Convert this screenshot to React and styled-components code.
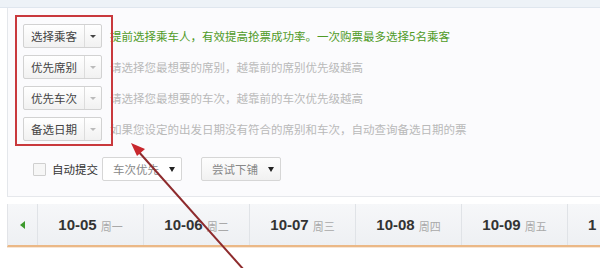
import React from "react"
import styled, { createGlobalStyle } from "styled-components"

const Global = createGlobalStyle`
  body {
    margin: 0;
    background: #fff;
    font-family: "Noto Sans CJK SC", "Liberation Sans", sans-serif;
    width: 600px;
    height: 268px;
    overflow: hidden;
  }
`

const Page = styled.div`
  position: relative;
  width: 600px;
  height: 268px;
  overflow: hidden;
`

const TopStrip = styled.div`
  height: 7px;
  background: #edf2f7;
  border-bottom: 1px solid #dfe6ee;
`

const Panel = styled.div`
  margin-left: 7px;
  border-left: 1px solid #e4e7eb;
  border-bottom: 1px solid #e6e8ec;
  background: #fbfbfd;
  padding: 16px 0 15px 15px;
  display: flex;
  flex-direction: column;
  gap: 7px;
`

const OptionRow = styled.div`
  display: flex;
  align-items: center;
  gap: 8px;
  height: 24px;
`

const Dropdown = styled.div`
  display: flex;
  width: 79px;
  height: 24px;
  box-sizing: border-box;
  border: 1px solid #d2d2d2;
  border-radius: 2px;
  background: linear-gradient(#ffffff, #f1f1f1);
  flex-shrink: 0;
`

const DropLabel = styled.span`
  flex: 1;
  display: flex;
  align-items: center;
  justify-content: center;
  font-size: 11.5px;
  color: #444;
  border-right: 1px solid #dcdcdc;
`

const DropArrow = styled.span`
  width: 16px;
  display: flex;
  align-items: center;
  justify-content: center;
  &::after {
    content: "";
    border-left: 3px solid transparent;
    border-right: 3px solid transparent;
    border-top: 3px solid ${p => (p.$active ? "#444" : "#bbb")};
  }
`

const Hint = styled.span`
  font-size: 11.5px;
  white-space: nowrap;
  color: ${p => (p.$green ? "#4f9a27" : "#b9b9b9")};
`

const SubmitRow = styled.div`
  display: flex;
  align-items: center;
  margin-top: 9px;
  padding-left: 10px;
  height: 24px;
`

const Check = styled.span`
  width: 11px;
  height: 11px;
  border: 1px solid #cfcfcf;
  background: #f6f6f6;
  border-radius: 1px;
  margin-right: 6px;
`

const CheckLabel = styled.span`
  font-size: 11.5px;
  color: #333;
  margin-right: 4px;
`

const Select = styled.div`
  width: 80px;
  height: 24px;
  box-sizing: border-box;
  border: 1px solid #d6d6d6;
  border-radius: 2px;
  background: ${p => (p.$shaded ? "linear-gradient(#fdfdfd, #f1f1f1)" : "#fff")};
  display: flex;
  align-items: center;
  padding: 0 6px 0 10px;
  margin-right: ${p => p.$gap || 0}px;
  font-size: 11.5px;
  color: #888;
  justify-content: space-between;
  &::after {
    content: "";
    border-left: 3px solid transparent;
    border-right: 3px solid transparent;
    border-top: 5px solid #222;
  }
`

const DateBar = styled.div`
  margin: 7px 0 0 7px;
  height: 41px;
  display: flex;
  border-left: 1px solid #e2e4e8;
  border-bottom: 2px solid #ebb886;
  background: linear-gradient(#f6f7f9, #eef0f3);
  box-shadow: 0 1px 0 #f7e6d6;
`

const PrevCell = styled.div`
  width: 29px;
  flex-shrink: 0;
  display: flex;
  align-items: center;
  justify-content: center;
  border-right: 1px solid #e0e3e7;
  &::before {
    content: "";
    border-top: 4px solid transparent;
    border-bottom: 4px solid transparent;
    border-right: 5px solid #3d9a2c;
  }
`

const DateCell = styled.div`
  width: 106px;
  flex-shrink: 0;
  box-sizing: border-box;
  display: flex;
  align-items: center;
  justify-content: ${p => (p.$edge ? "flex-start" : "center")};
  padding-left: ${p => (p.$edge ? 20 : 0)}px;
  gap: 4px;
  border-right: 1px solid #e0e3e7;
`

const DateNum = styled.span`
  font-family: "Liberation Sans", sans-serif;
  font-weight: bold;
  font-size: 15px;
  color: #333;
`

const Week = styled.span`
  font-size: 11px;
  color: #a9a9a9;
  margin-top: 2px;
`

const Highlight = styled.div`
  position: absolute;
  left: 15px;
  top: 15px;
  width: 98px;
  height: 131px;
  box-sizing: border-box;
  border: 2px solid #c9393d;
  pointer-events: none;
`

const Pointer = styled.svg`
  position: absolute;
  left: 0;
  top: 0;
  pointer-events: none;
`

const options = [
  { label: "选择乘客", hint: "提前选择乘车人，有效提高抢票成功率。一次购票最多选择5名乘客", green: true },
  { label: "优先席别", hint: "请选择您最想要的席别，越靠前的席别优先级越高" },
  { label: "优先车次", hint: "请选择您最想要的车次，越靠前的车次优先级越高" },
  { label: "备选日期", hint: "如果您设定的出发日期没有符合的席别和车次，自动查询备选日期的票" },
]

const dates = [
  ["10-05", "周一"],
  ["10-06", "周二"],
  ["10-07", "周三"],
  ["10-08", "周四"],
  ["10-09", "周五"],
]

function App() {
  return (
    <Page>
      <Global />
      <TopStrip />
      <Panel>
        {options.map(o => (
          <OptionRow key={o.label}>
            <Dropdown>
              <DropLabel>{o.label}</DropLabel>
              <DropArrow $active={o.green} />
            </Dropdown>
            <Hint $green={o.green}>{o.hint}</Hint>
          </OptionRow>
        ))}
        <SubmitRow>
          <Check />
          <CheckLabel>自动提交</CheckLabel>
          <Select $gap={19}>车次优先</Select>
          <Select $shaded>尝试下铺</Select>
        </SubmitRow>
      </Panel>
      <DateBar>
        <PrevCell />
        {dates.map(([d, w]) => (
          <DateCell key={d}>
            <DateNum>{d}</DateNum>
            <Week>{w}</Week>
          </DateCell>
        ))}
        <DateCell $edge>
          <DateNum>1</DateNum>
        </DateCell>
      </DateBar>
      <Highlight />
      <Pointer width="600" height="268">
        <line x1="244" y1="270" x2="138" y2="151" stroke="#8e2b2d" strokeWidth="2" />
        <polygon points="131,143 145,149 137,156" fill="#c8272d" />
      </Pointer>
    </Page>
  )
}

export default App
